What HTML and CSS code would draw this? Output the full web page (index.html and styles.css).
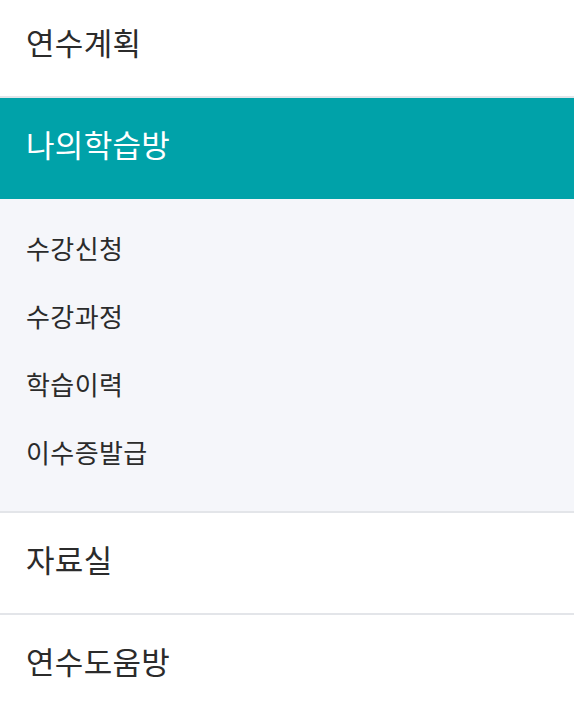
FILE: index.html
```html
<!DOCTYPE html>
<html lang="ko">
  <head>
    <meta charset="UTF-8" />
    <meta name="viewport" content="width=device-width, initial-scale=1" />
    <title>나의학습방</title>
    <link rel="stylesheet" href="styles.css">
  </head>
  <body>
    <nav class="side-menu">
      <ul class="menu">
        <li class="menu-item"><a href="#">연수계획</a></li>
        <li class="menu-item active">
          <a href="#">나의학습방</a>
          <ul class="sub-menu">
            <li><a href="#">수강신청</a></li>
            <li><a href="#">수강과정</a></li>
            <li><a href="#">학습이력</a></li>
            <li><a href="#">이수증발급</a></li>
          </ul>
        </li>
        <li class="menu-item"><a href="#">자료실</a></li>
        <li class="menu-item"><a href="#">연수도움방</a></li>
      </ul>
    </nav>
  </body>
</html>
```

FILE: styles.css
```css
body {
  font-family: "Noto Sans CJK KR", "Noto Sans", sans-serif;
  background: white;
  margin: 0;
  overflow: hidden;
}

.side-menu {
  margin-top: -4px;
}

ul {
  list-style: none;
  margin: 0;
  padding: 0;
}

a {
  text-decoration: none;
  color: #2b2b2b;
}

.menu-item {
  border-bottom: 2px solid #e3e5e9;
}

.menu-item > a {
  display: flex;
  align-items: center;
  height: 100px;
  padding: 0 26px 10px;
  box-sizing: border-box;
  font-size: 31px;
  font-weight: 400;
  letter-spacing: 0.3px;
}

.menu-item.active > a {
  background: #00a2a9;
  color: white;
  height: 101px;
}

.sub-menu {
  background: #f5f6fa;
  padding: 16px 0 24px;
}

.sub-menu a {
  display: flex;
  align-items: center;
  height: 68px;
  padding: 0 26px 3px;
  box-sizing: border-box;
  font-size: 26px;
  font-weight: 400;
  letter-spacing: 0.4px;
}
```
